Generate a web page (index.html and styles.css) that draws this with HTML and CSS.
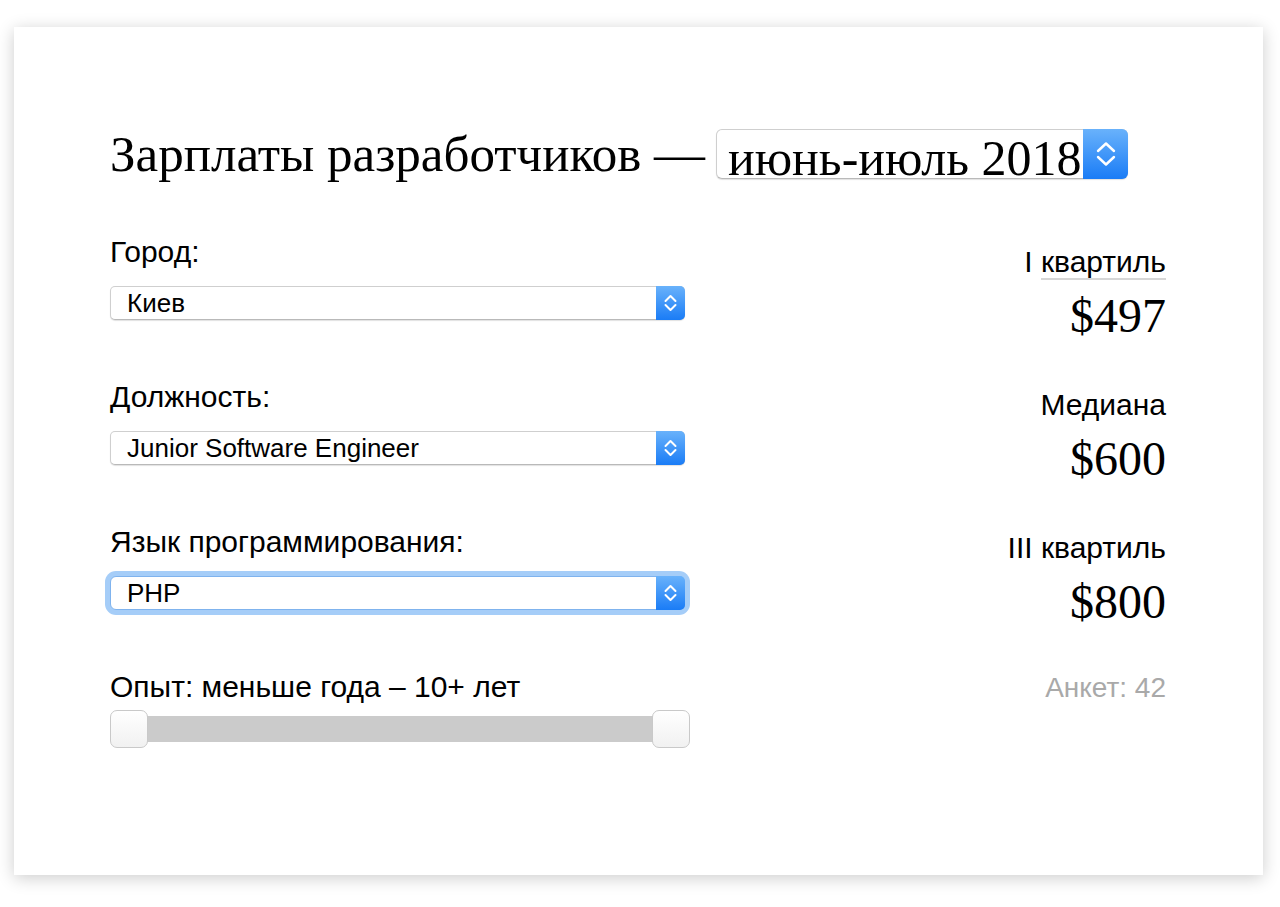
FILE: index.html
```html
<!DOCTYPE html>
<html lang="ru">
<head>
  <meta charset="UTF-8" />
  <meta name="viewport" content="width=device-width, initial-scale=1.0"/>
  <title>Зарплаты разработчиков</title>
  <link rel="stylesheet" href="styles.css">
</head>
<body>

<div class="card">

  <h1 class="title">
    <span class="title-text">Зарплаты разработчиков —</span>
    <span class="select select-period">
      <select id="period">
        <option>июнь-июль 2018</option>
        <option>декабрь 2017</option>
      </select>
      <span class="stepper">
        <svg width="22" height="30" viewBox="0 0 22 30"><path d="M3 12 L11 4.5 L19 12 M3 18 L11 25.5 L19 18" fill="none" stroke="#fff" stroke-width="2.4" stroke-linecap="round" stroke-linejoin="round"/></svg>
      </span>
    </span>
  </h1>

  <div class="columns">

    <!-- Filters -->
    <div class="filters">
      <div class="field">
        <label for="city">Город:</label>
        <div class="select">
          <select id="city">
            <option>Киев</option>
            <option>Харьков</option>
            <option>Львов</option>
          </select>
          <span class="stepper">
            <svg width="13" height="22" viewBox="0 0 13 22"><path d="M1.5 9 L6.5 4 L11.5 9 M1.5 13 L6.5 18 L11.5 13" fill="none" stroke="#fff" stroke-width="2" stroke-linecap="round" stroke-linejoin="round"/></svg>
          </span>
        </div>
      </div>

      <div class="field">
        <label for="position">Должность:</label>
        <div class="select">
          <select id="position">
            <option>Junior Software Engineer</option>
            <option>Software Engineer</option>
            <option>Senior Software Engineer</option>
          </select>
          <span class="stepper">
            <svg width="13" height="22" viewBox="0 0 13 22"><path d="M1.5 9 L6.5 4 L11.5 9 M1.5 13 L6.5 18 L11.5 13" fill="none" stroke="#fff" stroke-width="2" stroke-linecap="round" stroke-linejoin="round"/></svg>
          </span>
        </div>
      </div>

      <div class="field">
        <label for="language">Язык программирования:</label>
        <div class="select focused">
          <select id="language">
            <option>PHP</option>
            <option>JavaScript</option>
            <option>Java</option>
          </select>
          <span class="stepper">
            <svg width="13" height="22" viewBox="0 0 13 22"><path d="M1.5 9 L6.5 4 L11.5 9 M1.5 13 L6.5 18 L11.5 13" fill="none" stroke="#fff" stroke-width="2" stroke-linecap="round" stroke-linejoin="round"/></svg>
          </span>
        </div>
      </div>

      <div class="field field-range">
        <label>Опыт: меньше года – 10+ лет</label>
        <div class="slider">
          <span class="handle"></span>
          <span class="track"></span>
          <span class="handle"></span>
        </div>
      </div>
    </div>

    <!-- Results -->
    <div class="stats">
      <div class="stat">
        <div class="stat-label">I <span class="term">квартиль</span></div>
        <div class="stat-value">$497</div>
      </div>
      <div class="stat">
        <div class="stat-label">Медиана</div>
        <div class="stat-value">$600</div>
      </div>
      <div class="stat">
        <div class="stat-label">III квартиль</div>
        <div class="stat-value">$800</div>
      </div>
      <div class="count">Анкет: 42</div>
    </div>

  </div>
</div>

</body>
</html>
```

FILE: styles.css
```css
body {
  margin: 0;
  padding-bottom: 32px;
  background: #fff;
  font-family: 'Liberation Sans', Arial, sans-serif;
  color: #000;
}

.card {
  box-sizing: border-box;
  width: 1249px;
  height: 848px;
  margin: 27px 0 0 14px;
  padding: 102px 97px 0 96px;
  background: #fff;
  box-shadow: 0 3px 16px rgba(0,0,0,0.2);
}

/* Title row */
.title {
  display: flex;
  align-items: center;
  height: 50px;
  margin: 0;
  font-family: 'Liberation Serif', 'DejaVu Serif', serif;
  font-weight: normal;
  font-size: 51px;
  line-height: 50px;
}

.title-text {
  margin-right: 11px;
}

/* Select box */
.select {
  display: flex;
  height: 34px;
  background: #fff;
  border: 1px solid #cfcfcf;
  border-bottom-color: #b9b9b9;
  border-radius: 5px;
  box-shadow: 0 1px 1px rgba(0,0,0,0.12);
  box-sizing: border-box;
}

.select select {
  flex: 1;
  min-width: 0;
  margin: 0;
  padding: 0 0 0 16px;
  border: none;
  background: transparent;
  appearance: none;
  -webkit-appearance: none;
  font-family: 'Liberation Sans', Arial, sans-serif;
  font-size: 26px;
  color: #000;
  outline: none;
}

.stepper {
  display: flex;
  align-items: center;
  justify-content: center;
  width: 29px;
  margin: -1px -1px -1px 0;
  background: linear-gradient(#69b2fb, #1a7cf6);
  border-radius: 0 5px 5px 0;
}

.select-period {
  width: 412px;
  height: 50px;
  border-radius: 6px;
}

.select-period select {
  padding-left: 11px;
  font-family: 'Liberation Serif', 'DejaVu Serif', serif;
  font-size: 50px;
}

.select-period .stepper {
  width: 45px;
  border-radius: 0 6px 6px 0;
}

.select.focused {
  border-color: #7fb3ee;
  box-shadow: 0 0 0 5px #a5cdf8;
  border-radius: 6px;
}

/* Layout */
.columns {
  display: flex;
  justify-content: space-between;
  margin-top: 56px;
}

.filters {
  width: 575px;
}

.field {
  margin-bottom: 60px;
}

.field label {
  display: block;
  font-size: 30px;
  line-height: 34px;
  margin-bottom: 17px;
  white-space: nowrap;
}

.field-range {
  width: 580px;
}

.field-range label {
  margin-bottom: 6px;
}

/* Range slider */
.slider {
  display: flex;
  align-items: center;
  height: 38px;
}

.track {
  flex: 1;
  height: 26px;
  margin: 0 -3px;
  background: #cbcbcb;
}

.handle {
  position: relative;
  z-index: 1;
  width: 38px;
  height: 38px;
  box-sizing: border-box;
  border: 1px solid #c9c9c9;
  border-radius: 7px;
  background: linear-gradient(#fff, #f1f1f1);
}

/* Results */
.stats {
  padding-top: 10px;
  text-align: right;
}

.stat {
  margin-bottom: 47px;
}

.stat-label {
  font-size: 30px;
  line-height: 34px;
}

.term {
  padding-bottom: 0;
  border-bottom: 2px solid #d6d6d6;
}

.stat-value {
  margin-top: 12px;
  font-family: 'Liberation Serif', 'DejaVu Serif', serif;
  font-size: 48px;
  line-height: 50px;
  font-variant-numeric: oldstyle-nums;
}

.count {
  margin-top: -3px;
  font-size: 28px;
  line-height: 34px;
  color: #a9a9a9;
}
```
